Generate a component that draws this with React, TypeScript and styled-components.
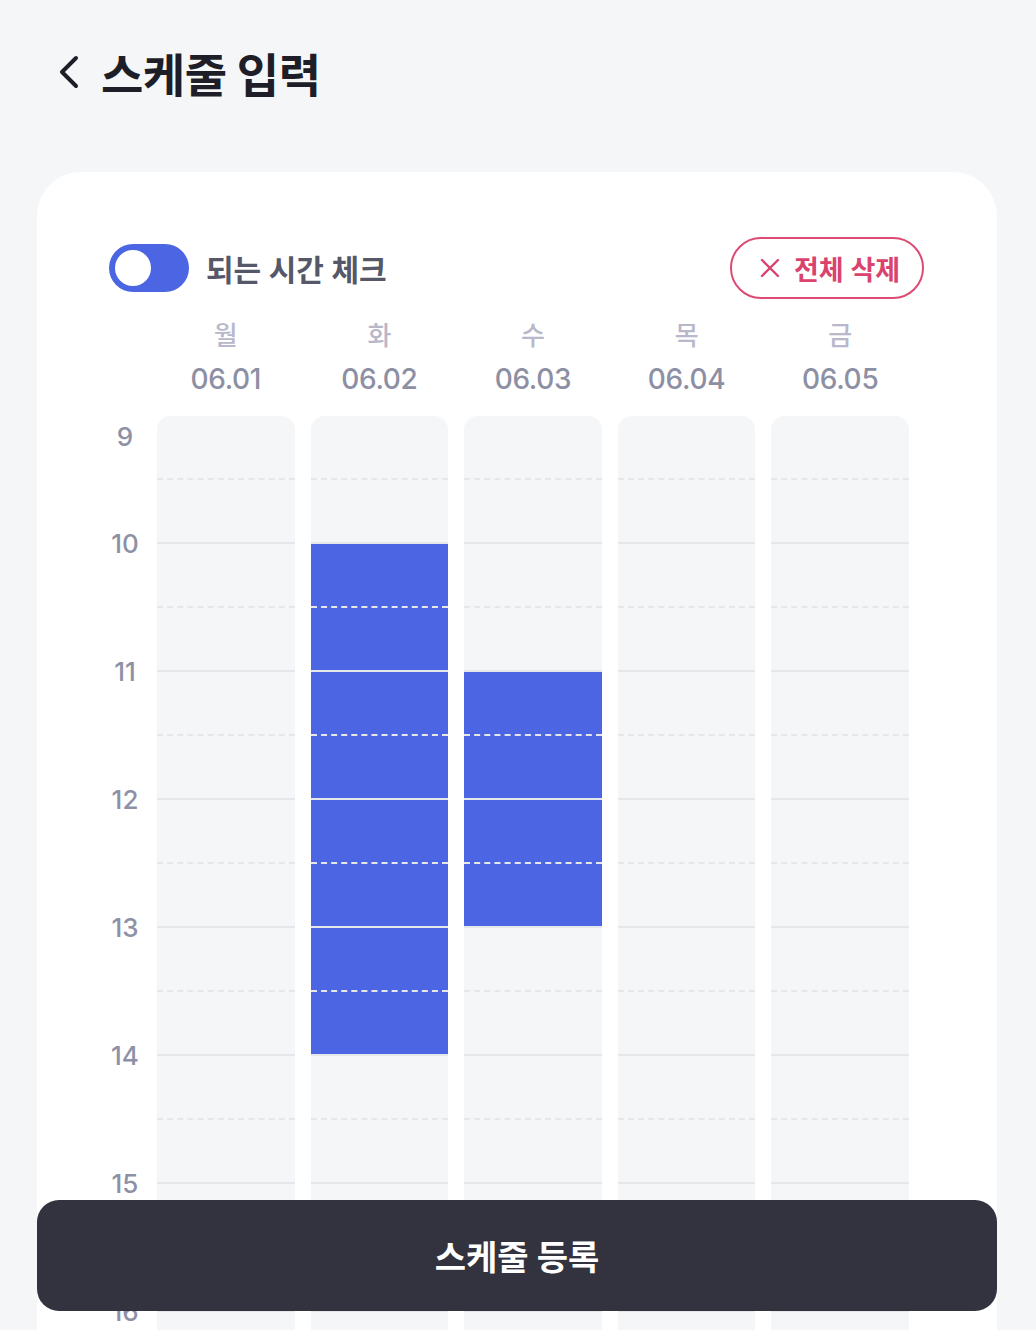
import styled, { createGlobalStyle, css } from "styled-components";

const GlobalStyle = createGlobalStyle`
  body {
    margin: 0;
    background: #f5f6f8;
    font-family: "Inter", "Noto Sans CJK KR", sans-serif;
    -webkit-font-smoothing: antialiased;
  }
`;

const DAYS = [
  { label: "월", date: "06.01" },
  { label: "화", date: "06.02" },
  { label: "수", date: "06.03" },
  { label: "목", date: "06.04" },
  { label: "금", date: "06.05" },
];

const HOURS = [9, 10, 11, 12, 13, 14, 15, 16, 17];

// half-hour slots from 9:00, index 0 = 9:00, 1 = 9:30 ...
const SLOT_COUNT = 18;
const SELECTED: Record<number, [number, number]> = {
  1: [2, 10], // 화 10:00 - 14:00
  2: [4, 8], // 수 11:00 - 13:00
};

function isSelected(day: number, slot: number) {
  const range = SELECTED[day];
  return !!range && slot >= range[0] && slot < range[1];
}

export default function App() {
  return (
    <Page>
      <GlobalStyle />
      <Header>
        <BackButton aria-label="뒤로">
          <svg width="26" height="36" viewBox="0 0 26 36" fill="none">
            <path
              d="M20 4 L6 18 L20 32"
              stroke="#1d1e27"
              strokeWidth="4"
              strokeLinecap="round"
              strokeLinejoin="round"
            />
          </svg>
        </BackButton>
        <Title>스케줄 입력</Title>
      </Header>

      <Card>
        <TopRow>
          <ToggleGroup>
            <Toggle>
              <Knob />
            </Toggle>
            <ToggleLabel>되는 시간 체크</ToggleLabel>
          </ToggleGroup>
          <ClearButton>
            <svg width="20" height="20" viewBox="0 0 20 20" fill="none">
              <path
                d="M2 2 L18 18 M18 2 L2 18"
                stroke="#d9436e"
                strokeWidth="2.4"
                strokeLinecap="round"
              />
            </svg>
            전체 삭제
          </ClearButton>
        </TopRow>

        <Schedule>
          <span />
          {DAYS.map((d) => (
            <DayHeader key={d.date}>
              <DayName>{d.label}</DayName>
              <DayDate>{d.date}</DayDate>
            </DayHeader>
          ))}

          <TimeColumn>
            {HOURS.map((h, i) => (
              <HourLabel key={h} $first={i === 0}>
                {h}
              </HourLabel>
            ))}
          </TimeColumn>
          {DAYS.map((d, day) => (
            <DayColumn key={d.date}>
              {Array.from({ length: SLOT_COUNT }, (_, slot) => (
                <Slot
                  key={slot}
                  $first={slot === 0}
                  $hour={slot % 2 === 0}
                  $active={isSelected(day, slot)}
                />
              ))}
            </DayColumn>
          ))}
        </Schedule>
      </Card>

      <SubmitButton>스케줄 등록</SubmitButton>
    </Page>
  );
}

const Page = styled.div`
  position: relative;
  height: 1330px;
  overflow: hidden;
`;

const Header = styled.header`
  display: flex;
  align-items: center;
  gap: 19px;
  height: 56px;
  padding: 44px 0 0 56px;
`;

const BackButton = styled.button`
  display: flex;
  padding: 0;
  border: 0;
  background: none;
  cursor: pointer;
`;

const Title = styled.h1`
  margin: 0;
  font-size: 46px;
  font-weight: 700;
  color: #1d1e27;
  letter-spacing: -0.5px;
`;

const Card = styled.main`
  margin: 72px 39px 0 37px;
  min-height: 1200px;
  padding: 65px 73px 0 72px;
  background: #fff;
  border-radius: 44px 44px 0 0;
`;

const TopRow = styled.div`
  display: flex;
  justify-content: space-between;
  align-items: center;
  height: 62px;
`;

const ToggleGroup = styled.div`
  display: flex;
  align-items: center;
  gap: 17px;
`;

const Toggle = styled.div`
  box-sizing: border-box;
  width: 80px;
  height: 48px;
  padding: 6px;
  border-radius: 24px;
  background: #4c66e3;
`;

const Knob = styled.div`
  width: 36px;
  height: 36px;
  border-radius: 50%;
  background: #fff;
`;

const ToggleLabel = styled.span`
  font-size: 30px;
  font-weight: 600;
  color: #555868;
`;

const ClearButton = styled.button`
  box-sizing: border-box;
  display: flex;
  align-items: center;
  justify-content: center;
  gap: 14px;
  width: 194px;
  height: 62px;
  padding: 0 0 0 6px;
  border: 2px solid #dd4a72;
  border-radius: 31px;
  background: #fff;
  font-family: inherit;
  font-size: 27px;
  font-weight: 600;
  color: #d9436e;
`;

const Schedule = styled.div`
  display: grid;
  grid-template-columns: 32px repeat(5, 1fr);
  column-gap: 16px;
  row-gap: 21px;
  width: 800px;
  margin-top: 21px;
`;

const DayHeader = styled.div`
  display: flex;
  flex-direction: column;
  align-items: center;
  gap: 11px;
`;

const DayName = styled.span`
  font-size: 26px;
  line-height: 32px;
  font-weight: 500;
  color: #b9b7ca;
`;

const DayDate = styled.span`
  font-size: 28px;
  line-height: 32px;
  font-weight: 500;
  color: #8d90a4;
  letter-spacing: -0.3px;
`;

const TimeColumn = styled.div`
  display: flex;
  flex-direction: column;
`;

const HourLabel = styled.div<{ $first: boolean }>`
  display: flex;
  align-items: center;
  justify-content: center;
  flex-shrink: 0;
  height: 128px;
  font-size: 26px;
  line-height: 32px;
  font-weight: 500;
  color: #8e91a5;

  ${(p) =>
    p.$first &&
    css`
      height: 59px;
      align-items: flex-start;
      padding-top: 5px;
    `}
`;

const DayColumn = styled.div`
  display: flex;
  flex-direction: column;
  background: #f5f6f8;
  border-radius: 14px 14px 0 0;
  overflow: hidden;
`;

const Slot = styled.div<{ $first: boolean; $hour: boolean; $active: boolean }>`
  box-sizing: border-box;
  flex-shrink: 0;
  height: 64px;
  border-top: 2px ${(p) => (p.$hour ? "solid" : "dashed")} #e6e7eb;
  background: ${(p) => (p.$active ? "#4c66e3" : "transparent")};

  ${(p) =>
    p.$first &&
    css`
      height: 62px;
      border-top: 0;
    `}
`;

const SubmitButton = styled.button`
  position: absolute;
  left: 37px;
  right: 39px;
  bottom: 19px;
  height: 111px;
  border: 0;
  border-radius: 22px;
  background: #32333f;
  font-family: inherit;
  font-size: 34px;
  font-weight: 700;
  color: #fff;
`;
